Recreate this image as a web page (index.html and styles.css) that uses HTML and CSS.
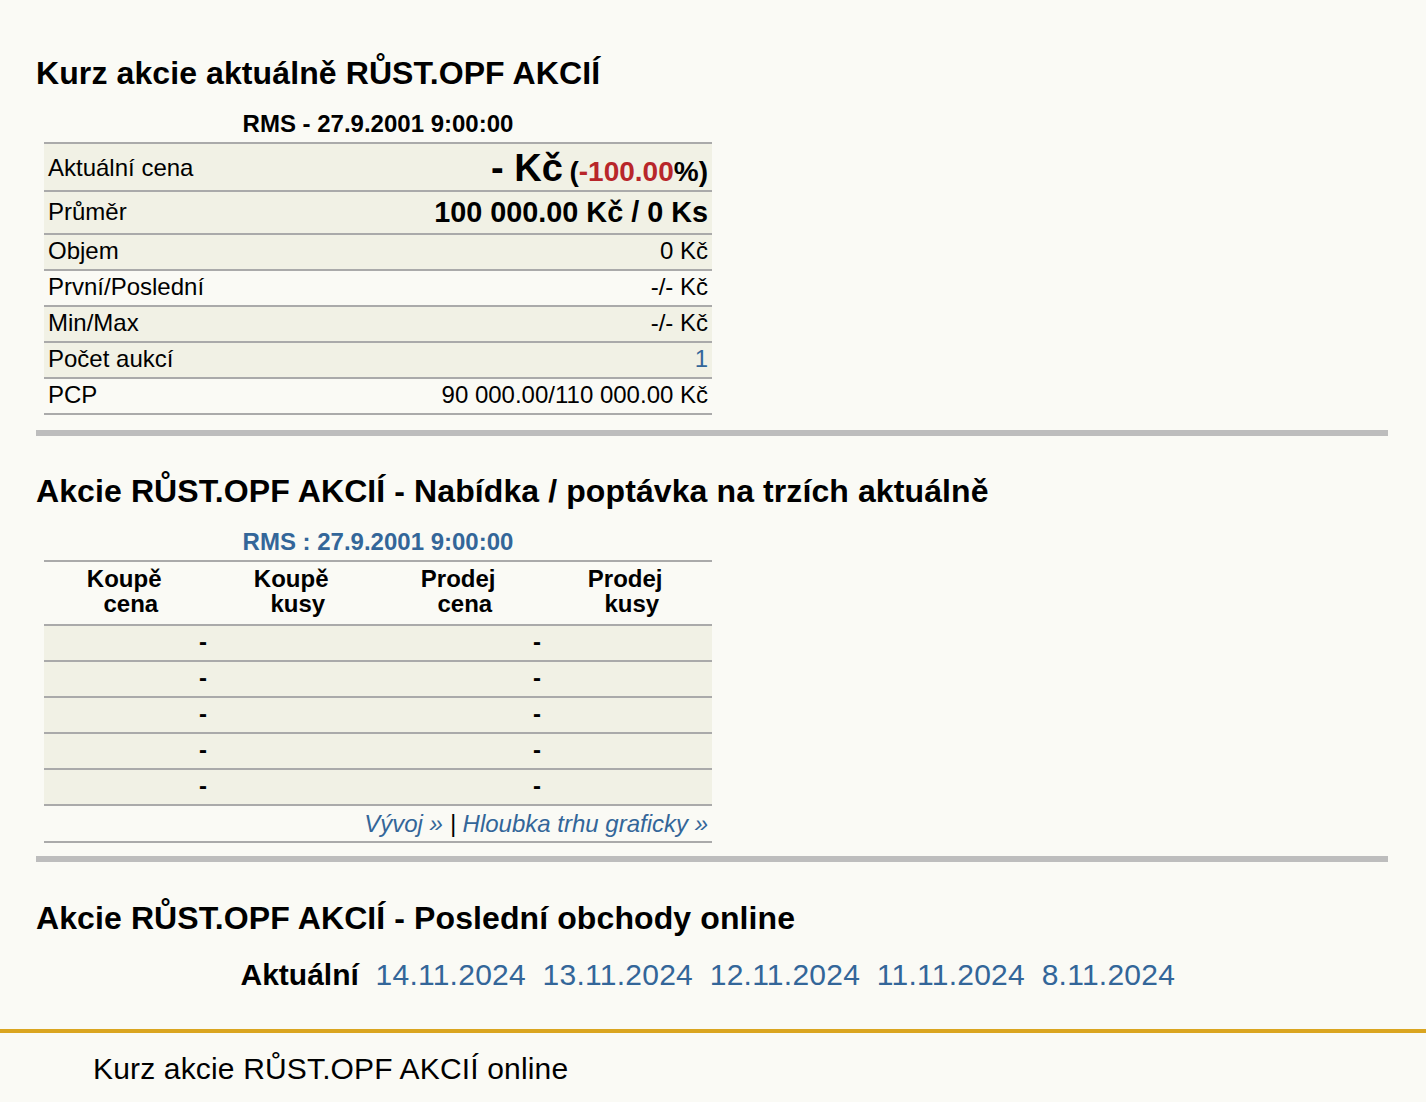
FILE: index.html
```html
<!DOCTYPE html>
<html lang="cs">
<head>
<meta charset="utf-8">
<title>Kurz akcie RŮST.OPF AKCIÍ</title>
<link rel="stylesheet" href="styles.css">
</head>
<body>
<main class="main">
  <section class="section">
    <h1 class="title">Kurz akcie aktuálně RŮST.OPF AKCIÍ</h1>
    <div class="box">
      <div class="caption">RMS - 27.9.2001 9:00:00</div>
      <table class="grid quote">
        <tr class="beige row-big"><td class="lbl">Aktuální cena</td><td class="val"><span class="big">- Kč</span> <span class="chg">(<span class="neg">-100.00</span>%)</span></td></tr>
        <tr class="beige row-avg"><td class="lbl">Průměr</td><td class="val avg">100 000.00 Kč / 0 Ks</td></tr>
        <tr class="beige"><td>Objem</td><td class="val">0 Kč</td></tr>
        <tr><td>První/Poslední</td><td class="val">-/- Kč</td></tr>
        <tr class="beige"><td>Min/Max</td><td class="val">-/- Kč</td></tr>
        <tr class="beige"><td>Počet aukcí</td><td class="val"><a class="link" href="#">1</a></td></tr>
        <tr><td>PCP</td><td class="val">90 000.00/110 000.00 Kč</td></tr>
      </table>
    </div>
  </section>
  <hr class="sep sep-1">
  <section class="section">
    <h2 class="title">Akcie RŮST.OPF AKCIÍ - Nabídka / poptávka na trzích aktuálně</h2>
    <div class="box">
      <div class="caption blue">RMS : 27.9.2001 9:00:00</div>
      <table class="grid book">
        <tr class="head"><th>Koupě&nbsp;<br>&nbsp;cena</th><th>Koupě&nbsp;<br>&nbsp;kusy</th><th>Prodej&nbsp;<br>&nbsp;cena</th><th>Prodej&nbsp;<br>&nbsp;kusy</th></tr>
        <tr class="beige"><td class="dash">-</td><td></td><td class="dash">-</td><td></td></tr>
        <tr class="beige"><td class="dash">-</td><td></td><td class="dash">-</td><td></td></tr>
        <tr class="beige"><td class="dash">-</td><td></td><td class="dash">-</td><td></td></tr>
        <tr class="beige"><td class="dash">-</td><td></td><td class="dash">-</td><td></td></tr>
        <tr class="beige"><td class="dash">-</td><td></td><td class="dash">-</td><td></td></tr>
        <tr class="links"><td colspan="4"><a class="link" href="#">Vývoj »</a> | <a class="link" href="#">Hloubka trhu graficky »</a></td></tr>
      </table>
    </div>
  </section>
  <hr class="sep sep-2">
  <section class="section">
    <h2 class="title">Akcie RŮST.OPF AKCIÍ - Poslední obchody online</h2>
    <p class="dates"><b>Aktuální</b>&nbsp; <a class="plain" href="#">14.11.2024</a>&nbsp; <a class="plain" href="#">13.11.2024</a>&nbsp; <a class="plain" href="#">12.11.2024</a>&nbsp; <a class="plain" href="#">11.11.2024</a>&nbsp; <a class="plain" href="#">8.11.2024</a>&nbsp;</p>
  </section>
</main>
<footer class="footer">
  <p class="foot-text">Kurz akcie RŮST.OPF AKCIÍ online</p>
</footer>
</body>
</html>
```
FILE: styles.css
```css
html, body {
  margin: 0;
  background: #fafaf5;
  color: #000;
  font-family: "Liberation Sans", Arial, sans-serif;
}

.main {
  padding: 54px 38px 0 36px;
}

.title {
  margin: 0;
  font-size: 32px;
  line-height: 38px;
  font-weight: bold;
  letter-spacing: 0.1px;
}

.box {
  width: 668px;
  margin: 18px 0 0 8px;
}

.caption {
  font-size: 24px;
  line-height: 28px;
  font-weight: bold;
  text-align: center;
  padding-bottom: 4px;
  border-bottom: 2px solid #aaaaaa;
}

.caption.blue {
  color: #336699;
}

.grid {
  width: 100%;
  border-collapse: separate;
  border-spacing: 0;
  font-size: 24px;
}

.grid td,
.grid th {
  border-bottom: 2px solid #aaaaaa;
  padding: 2px 4px 4px;
  line-height: 28px;
  height: 28px;
}

.beige td {
  background: #f1f1e5;
}

.quote td:first-child {
  text-align: left;
}

.quote .val {
  text-align: right;
}

.row-big td {
  height: 42px;
  line-height: 1;
  padding: 3px 4px 1px;
  vertical-align: middle;
}

.big {
  font-size: 38px;
  font-weight: bold;
}

.chg {
  font-size: 28px;
  font-weight: bold;
}

.neg {
  color: #b8262a;
}

.row-avg td {
  height: 34px;
  line-height: 34px;
  padding: 3px 4px 4px;
}

.avg {
  font-size: 28.8px;
  font-weight: bold;
}

.link {
  color: #336699;
  text-decoration: none;
}

.sep {
  height: 6px;
  margin: 0;
  border: 0;
  background: #bdbdbd;
}

.sep-1 {
  margin-top: 15px;
  margin-bottom: 36px;
}

.sep-2 {
  margin-top: 13px;
  margin-bottom: 37px;
}

.book {
  table-layout: fixed;
}

.book .head th {
  height: 50px;
  line-height: 25px;
  padding: 4px 4px 8px;
  text-align: center;
  font-weight: bold;
  background: transparent;
}

.book .dash {
  text-align: right;
  font-weight: bold;
}

.book .links td {
  text-align: right;
  font-style: italic;
  background: transparent;
  padding: 4px 4px 3px;
}

.dates {
  margin: 20px 0 0;
  font-size: 30px;
  line-height: 36px;
  text-align: center;
}

.plain {
  color: #336699;
  text-decoration: none;
  letter-spacing: 0.25px;
}

.footer {
  margin-top: 36px;
  border-top: 4px solid #daa520;
  padding: 18px 0 30px 93px;
}

.foot-text {
  margin: 0;
  font-size: 30px;
  line-height: 36px;
  letter-spacing: 0.16px;
}
```
